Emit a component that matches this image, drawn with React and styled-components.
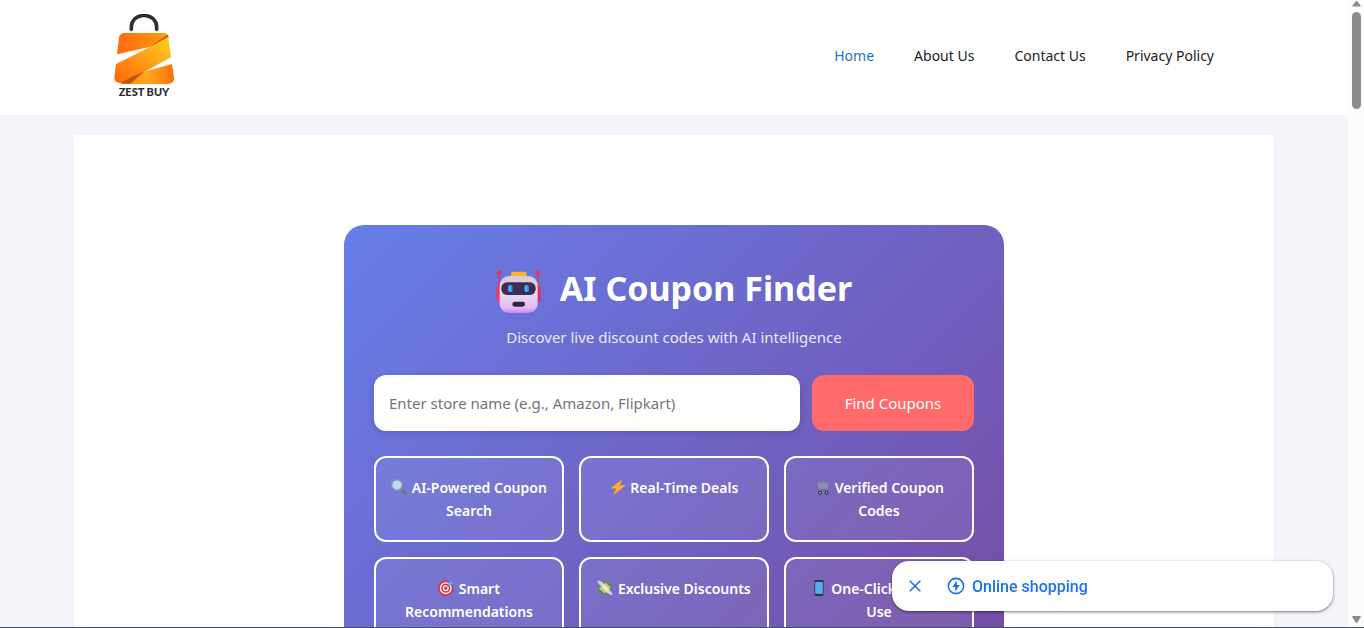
import { useState } from "react";
import styled, { createGlobalStyle } from "styled-components";

const GlobalStyle = createGlobalStyle`
  * {
    box-sizing: border-box;
  }
  body {
    margin: 0;
    overflow: hidden;
    background: #f4f5fa;
    font-family: "Noto Sans", "Open Sans", sans-serif;
  }
`;

const links = ["Home", "About Us", "Contact Us", "Privacy Policy"];

const features = [
  { icon: SearchIcon, label: "AI-Powered Coupon Search" },
  { icon: BoltIcon, label: "Real-Time Deals" },
  { icon: CartIcon, label: "Verified Coupon Codes" },
  { icon: TargetIcon, label: "Smart Recommendations" },
  { icon: MoneyIcon, label: "Exclusive Discounts" },
  { icon: PhoneIcon, label: "One-Click Copy & Use" },
];

function App() {
  const [store, setStore] = useState("");
  const [showSuggestion, setShowSuggestion] = useState(true);

  const submitHandler = (event) => {
    event.preventDefault();
  };

  return (
    <>
      <GlobalStyle />
      <Window>
        <Page>
          <Header>
            <HeaderInner>
              <Brand href="#">
                <BagLogo />
                <BrandName>ZEST BUY</BrandName>
              </Brand>
              <Nav>
                {links.map((link) => (
                  <NavLink key={link} href="#" $active={link === "Home"}>
                    {link}
                  </NavLink>
                ))}
              </Nav>
            </HeaderInner>
          </Header>
          <Content>
            <Finder>
              <Title>
                <RobotIcon />
                AI Coupon Finder
              </Title>
              <Subtitle>Discover live discount codes with AI intelligence</Subtitle>
              <SearchForm onSubmit={submitHandler}>
                <StoreInput
                  type="text"
                  aria-label="Store name"
                  placeholder="Enter store name (e.g., Amazon, Flipkart)"
                  value={store}
                  onChange={(event) => setStore(event.target.value)}
                />
                <FindButton type="submit">Find Coupons</FindButton>
              </SearchForm>
              <Features>
                {features.map(({ icon: Icon, label }) => (
                  <Feature key={label}>
                    <Icon /> {label}
                  </Feature>
                ))}
              </Features>
            </Finder>
          </Content>
        </Page>
        <Scrollbar>
          <Arrow viewBox="0 0 9 6">
            <path d="M4.5 0 L8.6 5 Q8.6 6 8 6 H1 Q.4 6 .4 5 Z" fill="#8b8b8b" />
          </Arrow>
          <Thumb />
          <Arrow viewBox="0 0 9 7">
            <path d="M1 0 H8 Q9 .3 8.6 1.2 L5.2 6.4 Q4.5 7.2 3.8 6.4 L.4 1.2 Q0 .3 1 0 Z" fill="#8b8b8b" />
          </Arrow>
        </Scrollbar>
      </Window>
      {showSuggestion && (
        <Suggestion>
          <CloseButton aria-label="Close" onClick={() => setShowSuggestion(false)}>
            <svg width="12" height="12" viewBox="0 0 12 12">
              <path d="M.7 .7 L11.3 11.3 M11.3 .7 L.7 11.3" stroke="#1a73e8" strokeWidth="1.6" />
            </svg>
          </CloseButton>
          <SuggestionLink href="#">
            <svg width="18" height="18" viewBox="0 0 18 18">
              <circle cx="9" cy="9" r="7.6" fill="none" stroke="#1a73e8" strokeWidth="1.6" />
              <path d="M9.8 3.2 L5.4 10 H8.2 V14.8 L12.6 8 H9.8 Z" fill="#1a73e8" />
            </svg>
            Online shopping
          </SuggestionLink>
        </Suggestion>
      )}
    </>
  );
}

function BagLogo() {
  return (
    <svg width="60" height="70" viewBox="60 42 180 210">
      <defs>
        <linearGradient id="bagTop" x1="0" x2="1">
          <stop offset="0" stopColor="#ff6a10" />
          <stop offset="1" stopColor="#ff9d0a" />
        </linearGradient>
        <linearGradient id="bagMiddle" x1="0" y1="1" x2="1" y2="0">
          <stop offset="0" stopColor="#ff6508" />
          <stop offset=".5" stopColor="#ff9a14" />
          <stop offset="1" stopColor="#ffd51f" />
        </linearGradient>
        <linearGradient id="bagBottom" x1="0" x2="1">
          <stop offset="0" stopColor="#f77a0c" />
          <stop offset=".5" stopColor="#ffa81c" />
          <stop offset="1" stopColor="#ff6e0a" />
        </linearGradient>
      </defs>
      <path d="M112 88 V83 C112 34 188 34 188 83 V88" fill="none" stroke="#2f2f33" strokeWidth="11" strokeLinecap="round" />
      <path d="M92 99 H208 Q221 99 223 111 L170 140 L69 163 L75 113 Q77 99 92 99 Z" fill="url(#bagTop)" />
      <path d="M222 104 L181 131 L168 141 L224 112 Z" fill="#b94a0c" />
      <path d="M66 192 L168 141 L221 111 Q223 111 224 118 L231 172 L150 216 L84 249 Q60 251 61 232 Z" fill="url(#bagMiddle)" />
      <path d="M234 192 L240 233 Q241 252 222 252 H80 L110 231 L150 215 Z" fill="url(#bagBottom)" />
      <path d="M80 250 L112 231 L152 214 L108 251 Z" fill="#c9500b" />
    </svg>
  );
}

function RobotIcon() {
  return (
    <svg width="46" height="46" viewBox="38 43 138 138" aria-hidden="true">
      <defs>
        <linearGradient id="robotHead" x1="0" y1="0" x2="0" y2="1">
          <stop offset="0" stopColor="#d6cbd6" />
          <stop offset=".5" stopColor="#e6d8ee" />
          <stop offset=".85" stopColor="#e2bdf6" />
          <stop offset="1" stopColor="#c987f2" />
        </linearGradient>
        <linearGradient id="robotEye" x1="0" x2="1">
          <stop offset="0" stopColor="#5cc8ff" />
          <stop offset="1" stopColor="#1687e6" />
        </linearGradient>
      </defs>
      <path d="M48 54 V98 M164 54 V98" stroke="#e0305f" strokeWidth="4" />
      <circle cx="48" cy="54" r="7" fill="#f0305c" />
      <circle cx="164" cy="54" r="7" fill="#f0305c" />
      <rect x="40" y="93" width="18" height="48" rx="7" fill="#f5336a" />
      <rect x="154" y="93" width="18" height="48" rx="7" fill="#e52a62" />
      <rect x="83" y="51" width="47" height="22" rx="6" fill="#f9b62e" />
      <rect x="49" y="64" width="114" height="111" rx="28" fill="url(#robotHead)" />
      <rect x="54" y="83" width="103" height="38" rx="17" fill="#3c2d56" />
      <rect x="75" y="91" width="13" height="21" rx="5" fill="url(#robotEye)" />
      <rect x="124" y="91" width="13" height="21" rx="5" fill="url(#robotEye)" />
      <rect x="87" y="141" width="38" height="15" rx="7" fill="#35233f" />
    </svg>
  );
}

function SearchIcon() {
  return (
    <Glyph viewBox="0 0 16 16">
      <path d="M9 9 L11.5 11.5" stroke="#8fa3ad" strokeWidth="2" />
      <path d="M11.3 11.3 L14.3 14.3" stroke="#66757f" strokeWidth="3" strokeLinecap="round" />
      <circle cx="6" cy="6" r="5.2" fill="#bbddf5" stroke="#8899a6" strokeWidth="1.4" />
    </Glyph>
  );
}

function BoltIcon() {
  return (
    <Glyph viewBox="0 0 16 16">
      <path d="M12.4 .2 Q12.8 -.2 12.4 .8 L9.8 6.2 H14.4 Q15.4 6.4 14.6 7.2 L3.8 15.8 Q3.2 16 3.6 15.2 L6.2 9.6 H1.6 Q.6 9.4 1.4 8.6 Z" fill="#ffac33" />
    </Glyph>
  );
}

function CartIcon() {
  return (
    <Glyph viewBox="0 0 16 16">
      <path d="M1.5 1 H3.3 L5.5 11 H13.5" fill="none" stroke="#66757f" strokeWidth="1" />
      <path d="M4 4 H14 L13.3 9.4 H5.1 Z" fill="#8295a0" fillOpacity=".45" />
      <path d="M4 4 H14 L13.3 9.4 H5.1 Z M4.4 6.2 H13.8 M4.8 8 H13.6 M6.2 4 V9.4 M8.2 4 V9.4 M10.2 4 V9.4 M12.2 4 V9.4" fill="none" stroke="#8c9ca6" strokeWidth=".8" />
      <circle cx="6" cy="13.7" r="1.4" fill="#b9c3ca" stroke="#292f33" strokeWidth="1.1" />
      <circle cx="12.6" cy="13.7" r="1.4" fill="#b9c3ca" stroke="#292f33" strokeWidth="1.1" />
    </Glyph>
  );
}

function TargetIcon() {
  return (
    <Glyph viewBox="0 0 16 16">
      <circle cx="7.7" cy="8.2" r="7.7" fill="#dd2e44" />
      <circle cx="7.7" cy="8.2" r="5.3" fill="none" stroke="#fff" strokeWidth="1.3" />
      <circle cx="7.7" cy="8.2" r="2.4" fill="none" stroke="#fff" strokeWidth="1.2" />
      <path d="M7.7 8.2 L12.2 3.6" stroke="#66757f" strokeWidth=".8" />
      <path d="M10.2 5.8 L10.4 2.8 L13 .3 L13.4 2.2 L15.8 2.8 L13.2 5.4 Z" fill="#55acee" />
    </Glyph>
  );
}

function MoneyIcon() {
  return (
    <Glyph viewBox="0 0 16 16">
      <path d="M.8 8.2 L8.4 1.2 L10.4 2.4 L12.6 2 L13.2 4.2 L15.2 6 L14.6 8.2 L7.4 15 L5.4 13.4 L3.4 13.8 L3 11.4 L1 10.2 Z" fill="#5c913b" />
      <path d="M2 8.2 L8.6 2.4 L13.8 7.6 L7.4 13.6 Z" fill="#a7d28b" />
      <path d="M2.2 3.8 L5.4 2.6 L13.2 10.2 L10.2 13 Z" fill="#ffe8b6" />
      <path d="M.4 .8 Q4 .2 5.8 3 L6.8 5.4 L4.6 5.8 Q1.4 5 .4 .8 Z M15.6 15.2 Q12 15 10.4 12.8 L9.6 10.4 L12.2 10.2 Q15 11.4 15.6 15.2 Z" fill="#ccd6dd" />
    </Glyph>
  );
}

function PhoneIcon() {
  return (
    <Glyph viewBox="0 0 16 16">
      <rect x="3.4" y="0" width="9.2" height="16" rx="1.2" fill="#31373d" />
      <rect x="4.2" y="2" width="7.6" height="11.8" fill="#55acee" />
    </Glyph>
  );
}

export default App;

const Window = styled.div`
  display: flex;
  height: 100vh;
  overflow: hidden;
  border-bottom: 1px solid #454f63;
`;

const Page = styled.div`
  flex: 1;
  min-width: 0;
  overflow: hidden;
`;

const Header = styled.header`
  background: #fff;
`;

const HeaderInner = styled.div`
  display: flex;
  justify-content: space-between;
  align-items: center;
  max-width: 1200px;
  height: 115px;
  margin: 0 auto;
  padding: 0 40px 4px;
`;

const Brand = styled.a`
  display: flex;
  flex-direction: column;
  align-items: center;
  gap: 2px;
  text-decoration: none;
`;

const BrandName = styled.span`
  font-family: Lato, sans-serif;
  font-size: 11px;
  font-weight: 900;
  line-height: 12px;
  color: #2b2b2e;
`;

const Nav = styled.nav`
  display: flex;
  gap: 40px;
  padding: 0 20px;
`;

const NavLink = styled.a`
  font-size: 14px;
  line-height: 20px;
  text-decoration: none;
  color: ${(props) => (props.$active ? "#1e73be" : "#222")};
`;

const Content = styled.main`
  max-width: 1200px;
  margin: 20px auto;
  padding: 90px 40px;
  background: #fff;
`;

const Finder = styled.section`
  max-width: 660px;
  margin: 0 auto;
  padding: 30px;
  border-radius: 20px;
  background: linear-gradient(135deg, #667eea 0%, #764ba2 100%);
  color: #fff;
  text-align: center;
`;

const Title = styled.h1`
  display: flex;
  justify-content: center;
  align-items: center;
  gap: 18px;
  margin: 6px 0 10px;
  font-size: 34px;
  font-weight: 700;
  line-height: 50px;
  svg {
    margin-top: 8px;
  }
`;

const Subtitle = styled.p`
  margin: 0 0 26px;
  font-size: 15px;
  line-height: 24px;
  opacity: 0.85;
`;

const SearchForm = styled.form`
  display: flex;
  gap: 12px;
  margin-bottom: 25px;
`;

const StoreInput = styled.input`
  flex: 1;
  min-width: 0;
  height: 56px;
  padding: 0 15px;
  border: none;
  border-radius: 12px;
  background: #fff;
  box-shadow: 0 2px 6px rgba(0, 0, 0, 0.15);
  font-family: inherit;
  font-size: 15px;
  &::placeholder {
    color: #757575;
  }
`;

const FindButton = styled.button`
  width: 162px;
  border: none;
  border-radius: 12px;
  background: #ff6b6b;
  color: #fff;
  font-family: inherit;
  font-size: 15px;
`;

const Features = styled.div`
  display: grid;
  grid-template-columns: repeat(3, 1fr);
  gap: 15px;
`;

const Feature = styled.div`
  min-height: 86px;
  padding: 18px 13px;
  border: 2px solid #fff;
  border-radius: 12px;
  background: rgba(255, 255, 255, 0.08);
  font-size: 14px;
  font-weight: 600;
  line-height: 23px;
`;

const Glyph = styled.svg.attrs({ "aria-hidden": true })`
  width: 16px;
  height: 16px;
  margin-right: 1px;
  vertical-align: -2px;
`;

const Scrollbar = styled.div`
  display: flex;
  flex-direction: column;
  align-items: center;
  width: 16px;
  background: #fcfcfc;
`;

const Arrow = styled.svg`
  width: 9px;
  height: 7px;
  margin-bottom: 4px;
`;

const Thumb = styled.div`
  width: 9px;
  height: 97px;
  margin: 1px 0 auto;
  border-radius: 5px;
  background: #8b8b8b;
`;

const Suggestion = styled.aside`
  position: fixed;
  right: 31px;
  bottom: 17px;
  display: flex;
  align-items: center;
  gap: 21px;
  width: 441px;
  height: 50px;
  padding: 0 12px;
  border-radius: 17px;
  background: #fff;
  box-shadow: 0 1px 3px rgba(0, 0, 0, 0.55);
`;

const CloseButton = styled.button`
  display: flex;
  justify-content: center;
  align-items: center;
  width: 22px;
  height: 22px;
  padding: 0;
  border: none;
  background: none;
`;

const SuggestionLink = styled.a`
  display: flex;
  align-items: center;
  gap: 7px;
  font-family: Roboto, sans-serif;
  font-size: 16px;
  font-weight: 500;
  color: #1a73e8;
  text-decoration: none;
`;
